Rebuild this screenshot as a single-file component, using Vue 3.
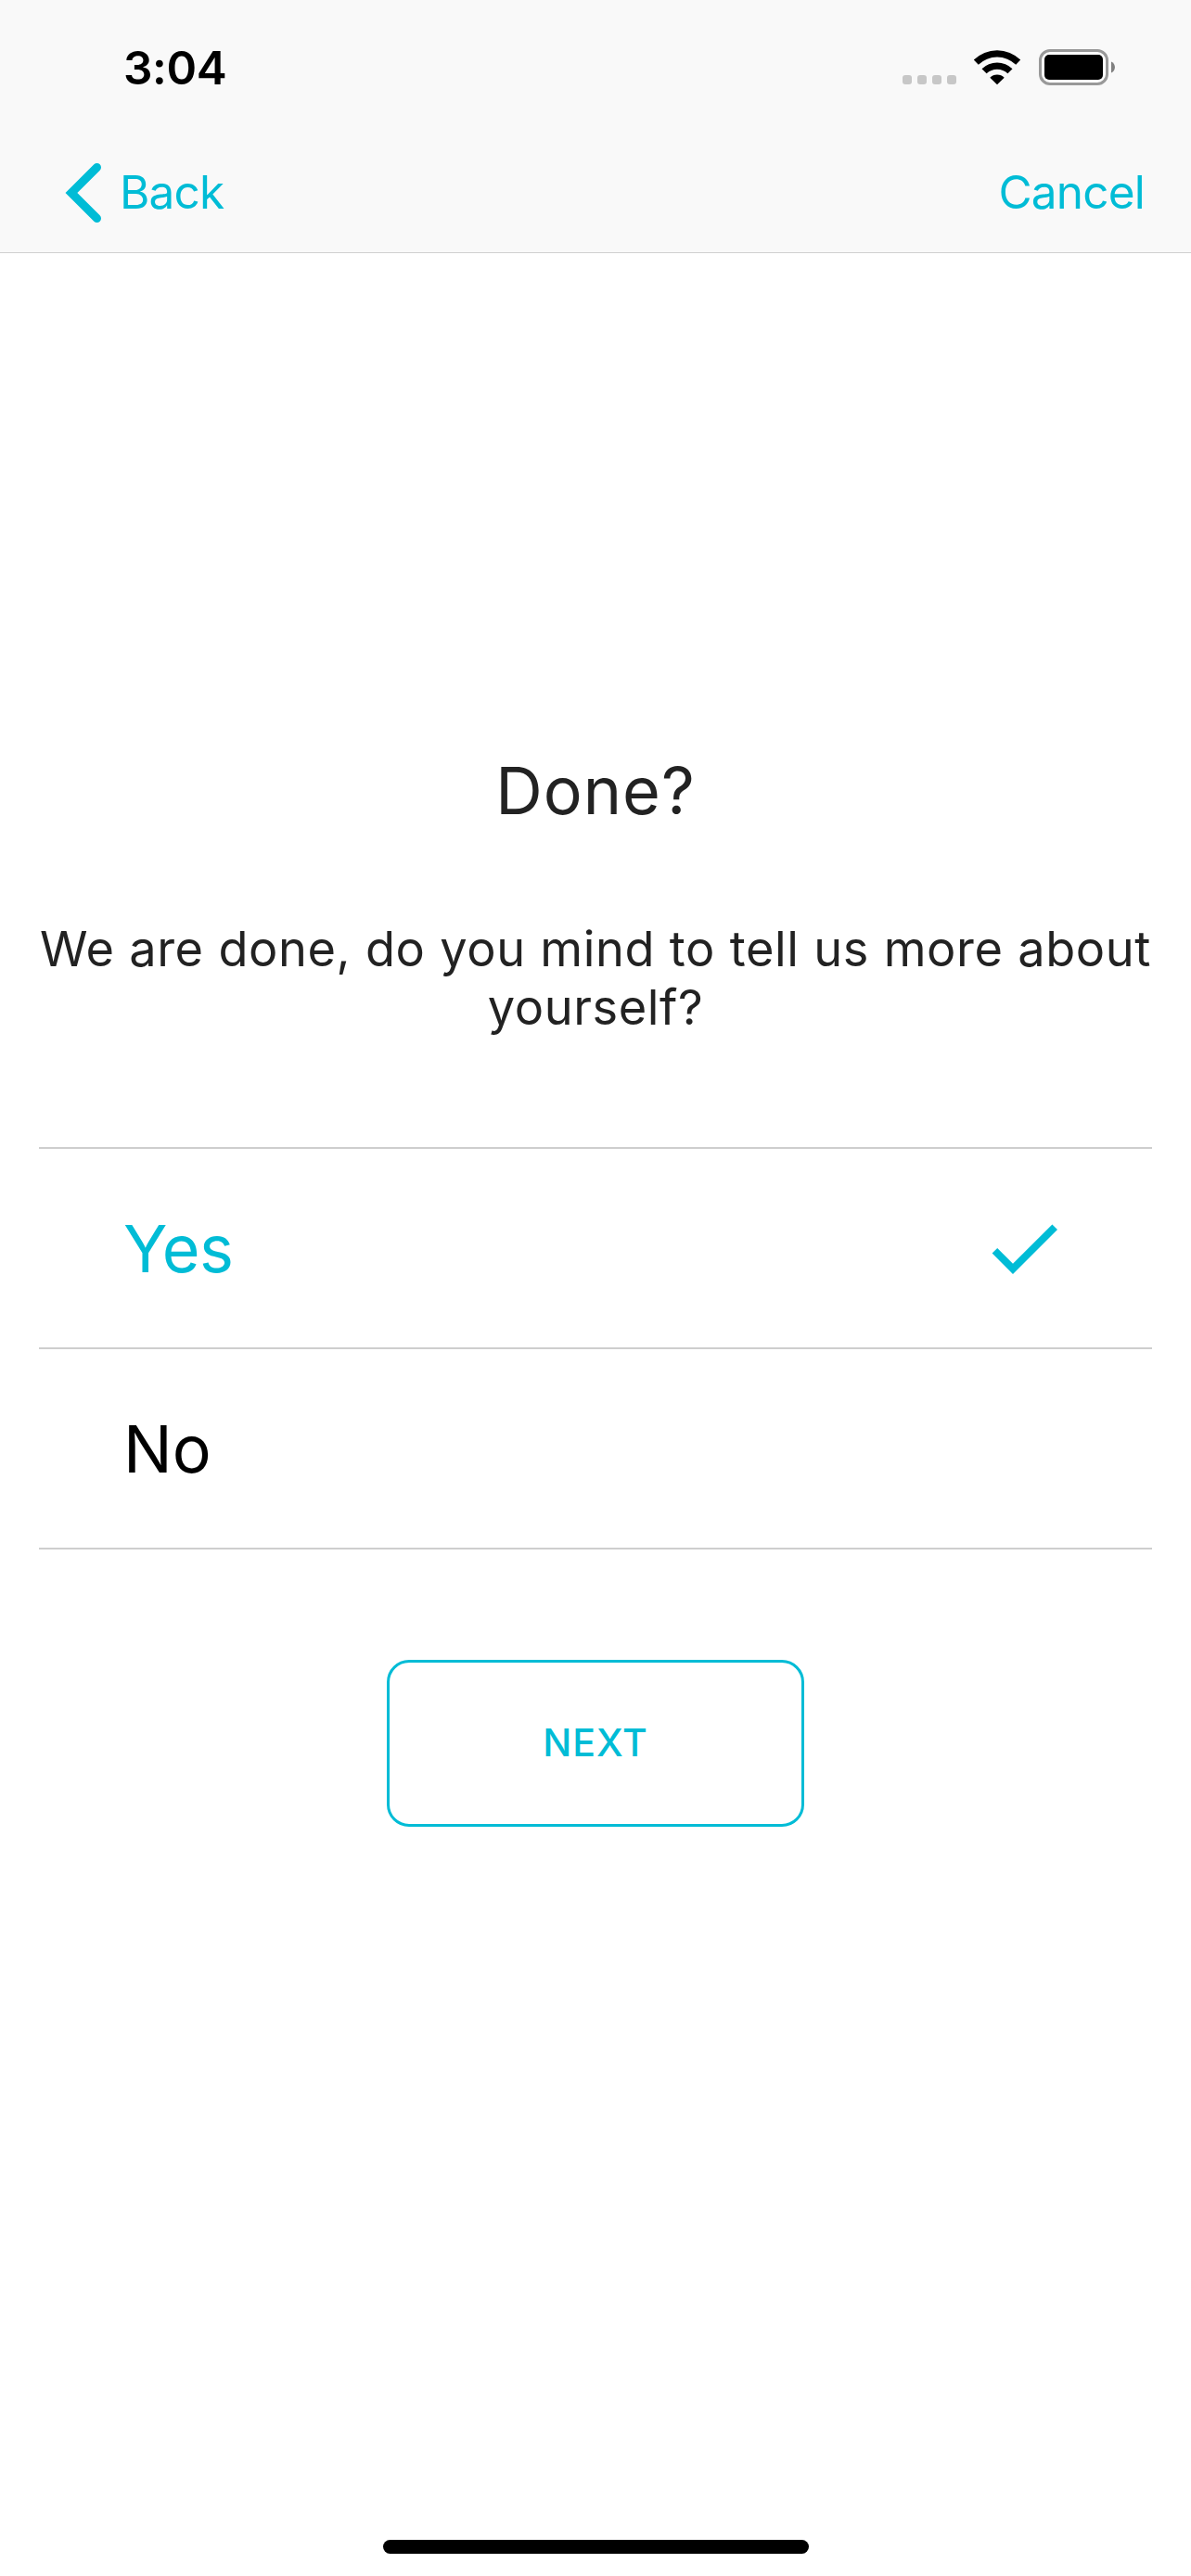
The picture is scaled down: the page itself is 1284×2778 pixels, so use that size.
<template>
  <div class="screen">
    <header class="header">
      <div class="status-bar">
        <span class="time">3:04</span>
        <div class="status-icons">
          <div class="signal">
            <span v-for="n in 4" :key="n" class="signal-dot"></span>
          </div>
          <svg class="wifi" viewBox="0 0 52 38" width="52" height="38">
            <path d="M0.8 10.6 A36 36 0 0 1 51.2 10.6 L46.2 15.7 A29 29 0 0 0 5.8 15.7 Z" />
            <path d="M9.5 20.2 A23.4 23.4 0 0 1 42.5 20.2 L37.4 25.3 A16.5 16.5 0 0 0 14.6 25.3 Z" />
            <path d="M18.3 29.7 A11 11 0 0 1 33.7 29.7 L26 37.2 Z" />
          </svg>
          <svg class="battery" viewBox="0 0 83 39" width="83" height="39">
            <rect x="1.5" y="1.5" width="72" height="36" rx="10.5" fill="#fff" stroke="#999" stroke-width="3" />
            <rect x="6" y="6" width="63" height="27" rx="5" />
            <path d="M78 13.5 C83.3 15.5 83.3 23.5 78 25.5 Z" fill="#808080" />
          </svg>
        </div>
      </div>
      <nav class="nav-bar">
        <button class="nav-button back" @click="selected = null">
          <svg viewBox="0 0 40 64" width="40" height="64">
            <path d="M34.5 4.5 L6.9 32 L34.5 59.5" />
          </svg>
          <span class="nav-label">Back</span>
        </button>
        <button class="nav-button cancel" @click="selected = null">
          <span class="nav-label">Cancel</span>
        </button>
      </nav>
    </header>

    <main class="content">
      <h1 class="title">Done?</h1>
      <p class="description">We are done, do you mind to tell us more about yourself?</p>

      <ul class="options">
        <li
          v-for="option in options"
          :key="option.value"
          class="option"
          :class="{ selected: option.value === selected }"
          @click="selected = option.value"
        >
          <span class="option-label">{{ option.text }}</span>
          <svg v-if="option.value === selected" viewBox="0 0 24 24" width="96" height="96">
            <path d="M9 16.2 L4.8 12 L3.4 13.4 L9 19 L21 7 L19.6 5.6 Z" fill="currentColor" />
          </svg>
        </li>
      </ul>

      <button class="next" :disabled="selected === null">NEXT</button>
    </main>

    <div class="home-indicator"></div>
  </div>
</template>

<script setup>
import { ref } from 'vue'

const options = [
  { text: 'Yes', value: 'yes' },
  { text: 'No', value: 'no' }
]

const selected = ref('yes')
</script>

<style>
body {
  margin: 0;
  background: #fff;
}
</style>

<style scoped>
.screen {
  display: flex;
  flex-direction: column;
  box-sizing: border-box;
  width: 1284px;
  height: 2778px;
  padding-bottom: 24px;
  background: #fff;
  color: #222;
  font-family: Inter, "Liberation Sans", sans-serif;
  overflow: hidden;
}

button {
  font-family: inherit;
  background: none;
  border: none;
  padding: 0;
  margin: 0;
}

.header {
  box-sizing: border-box;
  height: 273px;
  background: #f9f9f9;
  border-bottom: 1px solid #d0d0d0;
}

.status-bar {
  display: flex;
  justify-content: space-between;
  box-sizing: border-box;
  height: 141px;
  padding: 43px 81px 0 133px;
}

.time {
  font-size: 49.5px;
  line-height: 60px;
  font-weight: 600;
  letter-spacing: -0.4px;
  color: #000;
}

.status-icons {
  display: flex;
  align-items: flex-start;
  padding-top: 10px;
}

.signal {
  display: flex;
  gap: 6px;
  padding-top: 28px;
}

.signal-dot {
  width: 10px;
  height: 10px;
  border-radius: 3px;
  background: #c7c7c7;
}

.wifi {
  margin: 1px 19px 0 18px;
}

.nav-bar {
  display: flex;
  justify-content: space-between;
  align-items: center;
  box-sizing: border-box;
  height: 131px;
  padding: 2px 50px 0 70px;
}

.nav-button {
  display: flex;
  align-items: center;
  color: #00bcd6;
  font-size: 49.5px;
  line-height: 60px;
  letter-spacing: -0.8px;
}

.nav-button path {
  fill: none;
  stroke: currentColor;
  stroke-width: 9;
  stroke-linecap: round;
}

.nav-label {
  padding-bottom: 2px;
}

.back .nav-label {
  margin-left: 19px;
}

.content {
  flex: 1;
  display: flex;
  flex-direction: column;
  align-items: center;
  padding: 537px 42px 0;
}

.title {
  margin: 0;
  font-size: 70px;
  line-height: 86px;
  font-weight: 400;
  letter-spacing: 1px;
}

.description {
  margin: 96px -20px 0;
  font-size: 52.3px;
  line-height: 63px;
  letter-spacing: 0.6px;
  word-spacing: 0.4px;
  text-align: center;
}

.options {
  align-self: stretch;
  margin: 119px 0 0;
  padding: 0;
  list-style: none;
  border-top: 2px solid #cecece;
}

.option {
  display: flex;
  align-items: center;
  justify-content: space-between;
  height: 214px;
  padding: 0 90px 0 91px;
  border-bottom: 2px solid #cecece;
  color: #000;
  font-size: 70px;
}

.option.selected {
  color: #00bcd6;
  letter-spacing: -0.5px;
}

.next {
  box-sizing: border-box;
  width: 450px;
  height: 180px;
  margin-top: 119px;
  padding-bottom: 2px;
  border: 3px solid #00bcd6;
  border-radius: 24px;
  color: #00bcd6;
  font-size: 41px;
  font-weight: 500;
  letter-spacing: 1px;
}

.home-indicator {
  align-self: center;
  width: 459px;
  height: 15px;
  border-radius: 8px;
  background: #000;
}
</style>
